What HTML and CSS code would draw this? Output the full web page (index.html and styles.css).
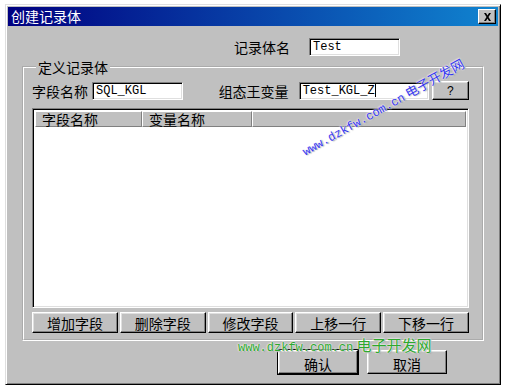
FILE: index.html
```html
<!DOCTYPE html>
<html lang="zh-CN">
<head>
  <meta charset="UTF-8">
  <meta name="viewport" content="width=device-width, initial-scale=1.0">
  <title>创建记录体</title>
  <link rel="stylesheet" href="styles.css">
</head>
<body>

  <div class="dialog">
    <div class="titlebar">
      <span class="title">创建记录体</span>
      <span class="close">
        <svg width="9" height="8" viewBox="0 0 9 8">
          <path d="M1 0h2l1.5 2.5L6 0h2L5.5 4 8 8H6L4.5 5.5 3 8H1l2.5-4z" fill="#000"/>
        </svg>
      </span>
    </div>

    <div class="content">
      <div class="name-row">
        <span class="label">记录体名</span>
        <div class="edit name-edit">Test</div>
      </div>

      <fieldset class="group">
        <legend>定义记录体</legend>

        <div class="field-row">
          <span class="label">字段名称</span>
          <div class="edit field-edit">SQL_KGL</div>
          <span class="label var-label">组态王变量</span>
          <div class="edit var-edit">Test_KGL_Z<span class="caret"></span></div>
          <div class="btn help">?</div>
        </div>

        <div class="list">
          <div class="list-head">
            <div class="col col-field">字段名称</div>
            <div class="col col-var">变量名称</div>
            <div class="col col-rest"></div>
          </div>
          <div class="list-body"></div>
        </div>

        <div class="actions">
          <div class="btn">增加字段</div>
          <div class="btn">删除字段</div>
          <div class="btn">修改字段</div>
          <div class="btn">上移一行</div>
          <div class="btn">下移一行</div>
        </div>
      </fieldset>

      <div class="footer">
        <div class="btn btn-ok">确认</div>
        <div class="btn btn-cancel">取消</div>
      </div>
    </div>

    <!-- 水印 -->
    <div class="mark mark-blue"><span class="mark-url">www.dzkfw.com.cn</span> 电子开发网</div>
    <div class="mark mark-green"><span class="mark-url">www.dzkfw.com.cn</span> 电子开发网</div>
  </div>

</body>
</html>
```

FILE: styles.css
```css
body {
  margin: 0;
  background: #fff;
  font-family: "Noto Sans CJK SC", "DejaVu Sans", sans-serif;
  font-size: 14px;
  color: #000;
}

.dialog {
  position: relative;
  width: 496px;
  height: 381px;
  margin: 4px 0 0 5px;
  box-sizing: border-box;
  background: #c0c0c0;
  border: 1px solid;
  border-color: #dfdfdf #000 #000 #dfdfdf;
  box-shadow: inset 1px 1px 0 #fff, inset -1px -1px 0 #808080;
  padding: 2px;
}

.titlebar {
  height: 19px;
  display: flex;
  align-items: center;
  justify-content: space-between;
  background: linear-gradient(to right, #000080, #1084d0);
  padding: 0 2px 0 3px;
}

.title {
  color: #fff;
  font-size: 14px;
  line-height: 19px;
}

.close {
  width: 18px;
  height: 15px;
  box-sizing: border-box;
  display: flex;
  align-items: center;
  justify-content: center;
  background: #c0c0c0;
  border: 1px solid;
  border-color: #fff #000 #000 #fff;
  box-shadow: inset -1px -1px 0 #808080;
}

.content {
  padding: 0 12px;
}

.label {
  line-height: 18px;
  white-space: nowrap;
}

.edit {
  height: 18px;
  box-sizing: border-box;
  background: #fff;
  border: 1px solid;
  border-color: #808080 #fff #fff #808080;
  box-shadow: inset 1px 1px 0 #000, inset -1px -1px 0 #dfdfdf;
  font-family: "Liberation Mono", monospace;
  font-size: 12px;
  line-height: 16px;
  padding: 0 3px;
  white-space: nowrap;
  display: flex;
  align-items: center;
}

.name-row {
  display: flex;
  align-items: center;
  margin-top: 12px;
  padding-left: 214px;
  gap: 19px;
}

.name-edit {
  width: 91px;
}

.group {
  margin: 3px 2px 0 2px;
  padding: 6px 13px 6px 8px;
  border: 2px groove #fff;
  min-width: 0;
}

.group legend {
  padding: 0 2px;
  margin-left: 4px;
  line-height: 16px;
}

.field-row {
  display: flex;
  align-items: center;
}

.field-edit {
  width: 92px;
  margin-left: 4px;
}

.var-label {
  margin-left: 36px;
}

.var-edit {
  width: 132px;
  margin-left: 10px;
}

.caret {
  display: inline-block;
  width: 1px;
  height: 13px;
  background: #000;
}

.btn {
  box-sizing: border-box;
  background: #c0c0c0;
  border: 1px solid;
  border-color: #fff #000 #000 #fff;
  box-shadow: inset -1px -1px 0 #808080, inset 1px 1px 0 #dfdfdf;
  display: flex;
  align-items: center;
  justify-content: center;
  font-size: 14px;
}

.help {
  width: 38px;
  height: 19px;
  margin-left: 3px;
  font-family: "Liberation Sans", sans-serif;
  font-size: 12px;
}

.list {
  margin-top: 8px;
  height: 200px;
  box-sizing: border-box;
  border: 1px solid;
  border-color: #808080 #fff #fff #808080;
  box-shadow: inset 1px 1px 0 #000, inset -1px -1px 0 #dfdfdf;
  padding: 2px;
  background: #fff;
  display: flex;
  flex-direction: column;
}

.list-head {
  display: flex;
  height: 16px;
}

.col {
  box-sizing: border-box;
  background: #c0c0c0;
  border: 1px solid;
  border-color: #fff #808080 #808080 #fff;
  line-height: 14px;
  padding-left: 6px;
}

.col-field {
  width: 107px;
}

.col-var {
  width: 110px;
}

.col-rest {
  flex: 1;
}

.list-body {
  flex: 1;
}

.actions {
  display: flex;
  gap: 2px;
  margin-top: 4px;
}

.actions .btn {
  flex: 1;
  height: 21px;
}

.footer {
  display: flex;
  gap: 9px;
  margin-top: 9px;
  padding-left: 258px;
}

.footer .btn {
  width: 80px;
  height: 24px;
  line-height: 16px;
  padding-top: 4px;
}

.btn-ok {
  outline: 1px solid #000;
}

.mark {
  position: absolute;
  white-space: nowrap;
  text-shadow: 0 0 2px #fff, 0 0 2px #fff, 1px 1px 1px #999;
}

.mark-url {
  font-family: "Liberation Mono", monospace;
}

.mark-blue {
  left: 285px;
  top: 92px;
  color: #3838f0;
  font-size: 13px;
  transform: rotate(-29deg);
}

.mark-blue .mark-url {
  font-size: 12px;
}

.mark-green {
  left: 232px;
  top: 331px;
  color: #2ea82e;
  font-size: 15px;
  line-height: 17px;
}

.mark-green .mark-url {
  font-size: 12px;
}
```
